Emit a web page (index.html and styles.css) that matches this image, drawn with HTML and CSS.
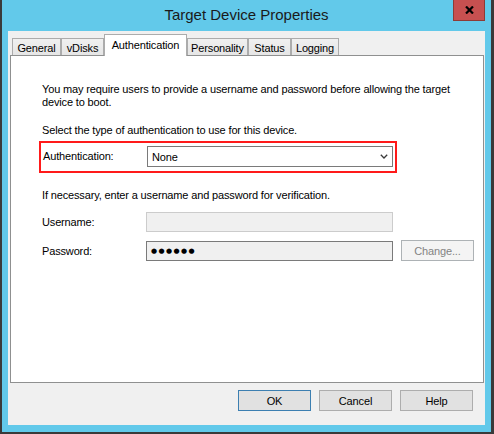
FILE: index.html
```html
<!DOCTYPE html>
<html>
<head>
<meta charset="utf-8">
<title>Target Device Properties</title>
<link rel="stylesheet" href="styles.css">
</head>
<body>
<div class="window">
  <div class="titlebar">
    <div class="spacer"></div>
    <div class="title">Target Device Properties</div>
    <div class="close">
      <svg width="9" height="8" viewBox="0 0 9 8"><path d="M1 0.5 L8 7.5 M8 0.5 L1 7.5" stroke="#000" stroke-width="2.2" fill="none"/></svg>
    </div>
  </div>
  <div class="client">
    <div class="tabs">
      <div class="tab t-general">General</div>
      <div class="tab t-vdisks">vDisks</div>
      <div class="tab selected t-auth">Authentication</div>
      <div class="tab t-pers">Personality</div>
      <div class="tab t-status">Status</div>
      <div class="tab t-log">Logging</div>
    </div>
    <div class="panel">
      <p class="intro">You may require users to provide a username and password before allowing the target<br>device to boot.</p>
      <p class="select-text">Select the type of authentication to use for this device.</p>
      <div class="auth-row">
        <span class="label">Authentication:</span>
        <div class="select">
          <span>None</span>
          <svg width="8" height="5" viewBox="0 0 8 5"><path d="M0.8 0.8 L4 4 L7.2 0.8" stroke="#3a3a3a" stroke-width="1.3" fill="none"/></svg>
        </div>
      </div>
      <p class="verify-text">If necessary, enter a username and password for verification.</p>
      <div class="field-row user-row">
        <span class="label">Username:</span>
        <div class="input disabled"></div>
      </div>
      <div class="field-row pass-row">
        <span class="label">Password:</span>
        <div class="input readonly"><span class="dots">●●●●●●</span></div>
        <div class="btn change">Change...</div>
      </div>
    </div>
    <div class="buttons">
      <div class="btn default">OK</div>
      <div class="btn">Cancel</div>
      <div class="btn">Help</div>
    </div>
  </div>
</div>
</body>
</html>
```

FILE: styles.css
```css
html, body {
  margin: 0;
  padding: 0;
  background: #ffffff;
}

.window {
  width: 494px;
  height: 434px;
  box-sizing: border-box;
  background: #62c9ea;
  border-style: solid;
  border-color: #3a3a3a;
  border-width: 0 3px 2px 2px;
  padding: 0 6px 7px 6px;
  display: flex;
  flex-direction: column;
  font-family: "Liberation Sans", Arial, sans-serif;
  font-size: 11px;
  letter-spacing: -0.15px;
  color: #000;
}

.titlebar {
  height: 31px;
  display: grid;
  grid-template-columns: 1fr auto 1fr;
  flex: none;
}

.title {
  font-size: 15px;
  letter-spacing: 0;
  line-height: 30px;
  color: #1a1a1a;
  white-space: nowrap;
}

.close {
  justify-self: end;
  align-self: start;
  width: 32px;
  height: 21px;
  box-sizing: border-box;
  background: #c75050;
  border: 1px solid #8e3b36;
  border-top: none;
  display: flex;
  align-items: center;
  justify-content: center;
}

.client {
  flex: 1;
  background: #f0f0f0;
  display: flex;
  flex-direction: column;
  padding: 4px 1px 0 2px;
}

.tabs {
  display: flex;
  align-items: flex-end;
  padding-left: 2px;
  height: 21px;
  margin-bottom: -1px;
}

.tab {
  box-sizing: border-box;
  height: 18px;
  border: 1px solid #acacac;
  border-bottom: none;
  background: linear-gradient(#f0f0f0, #e5e5e5);
  display: flex;
  align-items: center;
  justify-content: center;
  white-space: nowrap;
}

.tab.selected {
  height: 22px;
  background: #ffffff;
  position: relative;
  z-index: 2;
  padding-bottom: 1px;
}

.t-general { width: 49px; }
.t-vdisks { width: 43px; }
.t-auth { width: 83px; }
.t-pers { width: 61px; }
.t-status { width: 43px; }
.t-log { width: 48px; }

.panel {
  height: 328px;
  box-sizing: border-box;
  border: 1px solid #8f9090;
  background: #ffffff;
  padding: 27px 0 0 31px;
  display: flex;
  flex-direction: column;
  align-items: flex-start;
}

.panel p {
  margin: 0;
  line-height: 13px;
  white-space: nowrap;
}

.select-text {
  margin-top: 15px !important;
}

.auth-row {
  margin-top: 4px;
  margin-left: -3px;
  width: 358px;
  height: 32px;
  box-sizing: border-box;
  border: 2px solid #ff1a1a;
  padding: 3px 2px 4px 2px;
  display: flex;
  align-items: flex-start;
}

.auth-row .label {
  width: 104px;
  line-height: 21px;
}

.select {
  width: 246px;
  height: 21px;
  box-sizing: border-box;
  border: 1px solid #7a7a7a;
  background: #fff;
  display: flex;
  align-items: center;
  justify-content: space-between;
  padding: 0 4px 0 4px;
}

.verify-text {
  margin-top: 16px !important;
}

.field-row {
  display: flex;
  align-items: center;
}

.user-row {
  margin-top: 10px;
}

.pass-row {
  margin-top: 8px;
}

.field-row .label {
  width: 104px;
}

.input {
  width: 247px;
  height: 20px;
  box-sizing: border-box;
  background: #f0f0f0;
  display: flex;
  align-items: center;
  padding-left: 4px;
}

.input.disabled {
  border: 1px solid #cccccc;
}

.input.readonly {
  border: 1px solid #7a7a7a;
}

.dots {
  font-family: "DejaVu Sans", sans-serif;
  font-size: 7px;
  letter-spacing: 1.4px;
}

.btn {
  width: 73px;
  height: 21px;
  box-sizing: border-box;
  background: #e1e1e1;
  border: 1px solid #adadad;
  display: flex;
  align-items: center;
  justify-content: center;
}

.btn.default {
  border-color: #3c7fb1;
}

.btn.change {
  margin-left: 8px;
  background: #f4f4f4;
  border-color: #adb2b5;
  color: #838383;
}

.buttons {
  margin-top: 7px;
  display: flex;
  justify-content: flex-end;
  gap: 8px;
  padding-right: 11px;
}
```
